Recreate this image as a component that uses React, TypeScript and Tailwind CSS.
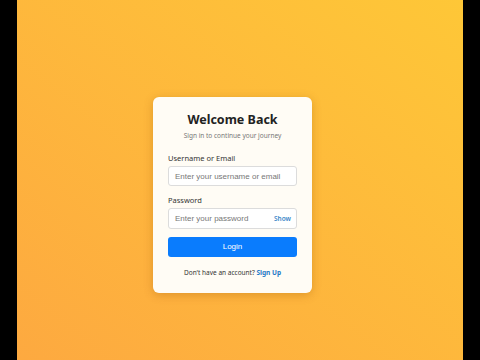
import { useState } from 'react';

export default function App() {
  const [showPassword, setShowPassword] = useState(false);

  return (
    <div className="flex h-[360px] w-[480px] bg-black" style={{ fontFamily: '"Noto Sans", "Open Sans", sans-serif' }}>
      <div className="ml-[17px] flex h-full w-[446px] items-start justify-center bg-linear-to-tr from-[#fda940] to-[#fec737] pt-[97px] pr-[15px]">
        <div className="flex h-[196px] w-[159px] flex-col rounded-[6px] bg-[#fffcf5] px-[15px] pt-[13px] shadow-[0_2px_10px_rgba(150,80,0,0.3)]">
          <h1 className="text-center text-[12.5px] leading-[20px] font-bold text-[#222]">Welcome Back</h1>
          <p className="mt-[1px] text-center text-[6.5px] leading-[10px] text-[#777]">Sign in to continue your journey</p>

          <label className="mt-[11px] text-[7.5px] leading-[12px] text-[#333]">Username or Email</label>
          <input
            type="text"
            placeholder="Enter your username or email"
            className="mt-[2px] block h-[20px] w-full rounded-[3px] border border-[#dcdcdc] bg-white px-[6px] text-[8px] placeholder:text-[#777] focus:outline-none"
            style={{ fontFamily: '"Liberation Sans", Arial, sans-serif' }}
          />

          <label className="mt-[8px] text-[7.5px] leading-[12px] text-[#333]">Password</label>
          <div className="relative mt-[2px] h-[21px]">
            <input
              type={showPassword ? 'text' : 'password'}
              placeholder="Enter your password"
              className="block h-[21px] w-full rounded-[3px] border border-[#dcdcdc] bg-white px-[6px] text-[8px] placeholder:text-[#777] focus:outline-none"
              style={{ fontFamily: '"Liberation Sans", Arial, sans-serif' }}
            />
            <button
              onClick={() => setShowPassword(!showPassword)}
              className="absolute top-0 right-[6px] flex h-[21px] items-center text-[6.5px] font-semibold text-[#3a86c8]"
            >
              {showPassword ? 'Hide' : 'Show'}
            </button>
          </div>

          <button
            className="mt-[8px] block h-[20px] w-full rounded-[3px] bg-[#0a7cfd] text-[8px] text-white"
            style={{ fontFamily: '"Liberation Sans", Arial, sans-serif' }}
          >
            Login
          </button>

          <p className="mt-[11px] text-center text-[6.5px] leading-[10px] text-[#333]">
            Don't have an account? <span className="font-bold text-[#1f78c6]">Sign Up</span>
          </p>
        </div>
      </div>
      <div className="flex-1" />
    </div>
  );
}
